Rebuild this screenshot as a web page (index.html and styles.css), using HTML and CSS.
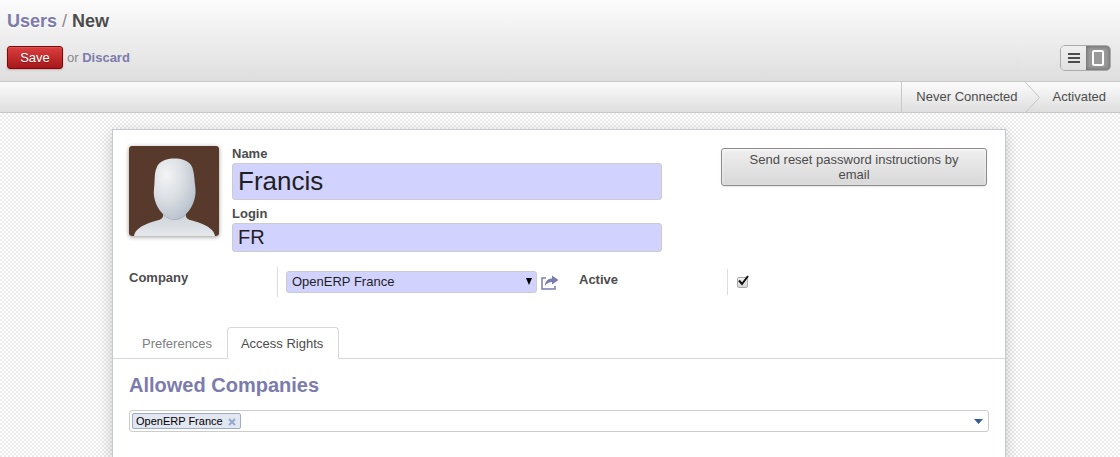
FILE: index.html
```html
<!DOCTYPE html>
<html lang="en">
<head>
<meta charset="utf-8">
<title>Users / New</title>
<link rel="stylesheet" href="styles.css">
</head>
<body>
<header class="control-panel">
  <h1 class="breadcrumb"><a href="#users">Users</a> <span class="separator">/</span> New</h1>
  <div class="toolbar">
    <div class="actions">
      <button class="btn-save" type="submit" form="user-form">Save</button>
      <span>or <a href="#discard">Discard</a></span>
    </div>
    <div class="view-switch">
      <button type="button" aria-label="List view">
        <svg width="12" height="10" viewBox="0 0 12 10"><path d="M0 1h12M0 5h12M0 9h12" stroke="#4c4c4c" stroke-width="2"/></svg>
      </button>
      <button class="active" type="button" aria-label="Form view">
        <svg width="14" height="18" viewBox="0 0 14 18"><rect x="2" y="2" width="10" height="14" rx="1" fill="none" stroke="#fff" stroke-width="2"/></svg>
      </button>
    </div>
  </div>
</header>
<div class="status-row">
  <ol class="status">
    <li>Never Connected</li>
    <li class="arrow"><svg width="16" height="31" viewBox="0 0 16 31"><path d="M0 0L14.500 15.500L0 31" fill="none" stroke="#c4c4c4"/></svg></li>
    <li>Activated</li>
  </ol>
</div>
<main class="workspace">
  <form class="sheet" id="user-form">
    <div class="identity">
      <svg class="avatar" width="90" height="90" viewBox="0 0 90 90" role="img" aria-label="User photo">
        <defs>
          <linearGradient id="body" x1="0" y1="0" x2="0" y2="1"><stop offset="0" stop-color="#b9c2cc"/><stop offset=".4" stop-color="#d3d8dd"/><stop offset="1" stop-color="#e6e9ec"/></linearGradient>
          <radialGradient id="head" cx=".3" cy=".28" r=".85"><stop offset="0" stop-color="#f3f4f5"/><stop offset=".45" stop-color="#dce0e4"/><stop offset="1" stop-color="#b3bdc9"/></radialGradient>
        </defs>
        <rect width="90" height="90" fill="#573a2b"/>
        <path d="M5 90C6 84 12 80 20 77C28 74 34 74 34 70V62H57V70C57 74 63 74 71 77C79 80 85 84 86 90Z" fill="url(#body)"/>
        <path d="M34 67Q45 79 57 67V69Q46 79 34 69Z" fill="#8f9daf" opacity=".7"/>
        <path d="M45.500 12.500C54 12.500 61 15 63.500 22C65.500 28 65.500 36 66.500 43C67.500 53 62 64 56 69C50 74 41 74 35 69C29 64 23.500 53 25 43C26 36 25 28 27.500 22C30 15 37 12.500 45.500 12.500Z" fill="url(#head)"/>
      </svg>
      <div class="names">
        <label for="name">Name</label>
        <input class="name-input" id="name" type="text" value="Francis">
        <label for="login">Login</label>
        <input class="login-input" id="login" type="text" value="FR">
      </div>
      <button class="btn-reset" type="button">Send reset password instructions by email</button>
    </div>
    <div class="groups">
      <div class="group">
        <label class="group-label" for="company">Company</label>
        <div class="group-field">
          <div class="select-wrap">
            <select id="company"><option>OpenERP France</option></select>
            <svg class="caret" width="6" height="7" viewBox="0 0 6 7"><path d="M0 0H6L3 7Z" fill="#000"/></svg>
          </div>
          <a class="open-link" href="#company" aria-label="Open company"><svg width="18" height="15" viewBox="0 0 18 15"><path d="M5 3H1V14H14V11" fill="none" stroke="#7c7bad" stroke-width="1.500"/><path d="M11 0.500L17.500 5L11 9.500V7C8 7 6 8 4 11C4 6 7 3.500 11 3.500Z" fill="#7c7bad"/></svg></a>
        </div>
      </div>
      <div class="group group-active">
        <label class="group-label" for="active">Active</label>
        <div class="group-field">
          <input class="check" id="active" type="checkbox" checked>
          <svg class="tick" width="12" height="12" viewBox="0 0 12 12"><path d="M2 5.500L5 9L11 1" fill="none" stroke="#111" stroke-width="2"/></svg>
        </div>
      </div>
    </div>
    <div class="tabs" role="tablist">
      <button type="button" role="tab" aria-selected="false">Preferences</button>
      <button type="button" role="tab" aria-selected="true">Access Rights</button>
    </div>
    <section class="page">
      <h2>Allowed Companies</h2>
      <div class="tag-field">
        <span class="tag">OpenERP France <button type="button" aria-label="Remove OpenERP France"><svg width="8" height="8" viewBox="0 0 8 8"><path d="M1 1L7 7M7 1L1 7" stroke="#94a9cf" stroke-width="2"/></svg></button></span>
        <input type="text" aria-label="Allowed companies">
        <button class="tag-open" type="button" aria-label="Show companies"><svg width="9" height="5" viewBox="0 0 9 5"><path d="M0 0H9L4.500 5Z" fill="#2f5d94"/></svg></button>
      </div>
    </section>
  </form>
</main>
</body>
</html>
```
FILE: styles.css
```css
* {
  box-sizing: border-box;
}

body {
  margin: 0;
  min-height: 100vh;
  display: flex;
  flex-direction: column;
  color: #4c4c4c;
  background: #fff;
  font: 13px/15px "Liberation Sans", Arial, sans-serif;
}

button,
input,
select {
  margin: 0;
  font: inherit;
  color: inherit;
}

button {
  cursor: pointer;
}

svg {
  display: block;
}

a {
  color: #7c7bad;
  font-weight: bold;
  text-decoration: none;
}

.control-panel {
  padding: 8px 9px 10px 7px;
  border-bottom: 1px solid #c8c8c8;
  background: linear-gradient(#fcfcfc, #dedede);
}

.breadcrumb {
  margin: 0 0 11px;
  font-size: 18px;
  line-height: 26px;
  text-shadow: 0 1px 1px #fff;
}

.separator {
  color: #8a8a8a;
  font-weight: normal;
}

.toolbar,
.actions {
  display: flex;
}

.toolbar {
  align-items: flex-start;
  justify-content: space-between;
}

.actions {
  align-items: center;
  gap: 4px;
  height: 25px;
  color: #8a8a8a;
}

.btn-save {
  width: 56px;
  height: 23px;
  padding: 0;
  border: 1px solid #900000;
  border-radius: 3px;
  color: #fff;
  background: linear-gradient(#dc3e3e, #a6181b);
  box-shadow: 0 1px 2px rgba(0, 0, 0, .2), inset 0 1px 1px rgba(155, 155, 155, .4);
  text-shadow: 0 1px 1px rgba(0, 0, 0, .3);
}

.view-switch {
  display: flex;
  height: 26px;
  border: 1px solid #ababab;
  border-radius: 5px;
  overflow: hidden;
}

.view-switch button {
  display: flex;
  align-items: center;
  justify-content: center;
  width: 25px;
  padding: 0;
  border: 0;
  background: linear-gradient(#efefef, #e0e0e0);
}

.view-switch .active {
  width: 24px;
  background: #999;
  box-shadow: inset 0 0 4px rgba(0, 0, 0, .4);
}

.status-row {
  display: flex;
  justify-content: flex-end;
  height: 31px;
  border-bottom: 1px solid #c8c8c8;
  background: linear-gradient(#fcfcfc, #dedede);
}

.status {
  display: flex;
  margin: 0;
  padding: 0 14px;
  border-left: 1px solid #c8c8c8;
  list-style: none;
  line-height: 30px;
}

.arrow {
  margin: 0 12px 0 7px;
}

.workspace {
  flex: 1;
  display: flex;
  justify-content: center;
  padding: 16px 18px 0 16px;
  background: repeating-conic-gradient(#ebebeb 0 25%, #fff 0 50%) 0 0 / 4px 4px;
}

.sheet {
  width: 100%;
  max-width: 894px;
  padding: 16px 0;
  border: 1px solid #c8c8d3;
  border-bottom: 0;
  background: #fff;
  box-shadow: 0 4px 14px rgba(0, 0, 0, .2);
}

.identity {
  display: flex;
  align-items: flex-start;
  padding: 0 18px 0 16px;
}

.avatar {
  border-radius: 3px;
  box-shadow: 0 1px 4px rgba(0, 0, 0, .4);
}

.names {
  flex: 0 1 430px;
  display: flex;
  flex-direction: column;
  margin-left: 13px;
}

label {
  font-weight: bold;
}

.names label {
  padding-bottom: 2px;
}

.names input {
  width: 100%;
  padding: 0 5px;
  border: 1px solid #ccc;
  border-radius: 3px;
  color: #1f1f1f;
  background: #d2d2ff;
}

.names .name-input {
  height: 37px;
  margin-bottom: 6px;
  font-size: 26px;
}

.names .login-input {
  height: 29px;
  font-size: 20px;
}

.btn-reset {
  width: 266px;
  margin: 2px 0 0 auto;
  padding: 3px 12px;
  border: 1px solid #8c8c8c;
  border-radius: 3px;
  background: linear-gradient(#efefef, #d8d8d8);
  box-shadow: 0 1px 2px rgba(0, 0, 0, .1), inset 0 1px 3px rgba(255, 255, 255, .8);
}

.groups {
  display: grid;
  grid-template-columns: 450px 1fr;
  padding: 15px 16px 0;
}

.group {
  display: grid;
  grid-template-columns: 148px 1fr;
  height: 32px;
}

.group-label {
  padding-top: 3px;
}

.group-active {
  padding-top: 2px;
}

.group-field {
  display: flex;
  align-items: center;
  position: relative;
  height: 30px;
  padding-left: 8px;
  border-left: 1px solid #ddd;
}

.group-active .group-field {
  height: 26px;
}

.select-wrap {
  position: relative;
  width: 251px;
}

select {
  display: block;
  width: 100%;
  height: 22px;
  padding: 0 5px 1px;
  border: 1px solid #ccc;
  border-radius: 3px;
  appearance: none;
  color: #1f1f1f;
  background: #d2d2ff;
}

.caret {
  position: absolute;
  top: 7px;
  right: 5px;
  pointer-events: none;
}

.open-link {
  margin-left: 4px;
}

.check {
  appearance: none;
  width: 11px;
  height: 11px;
  margin-left: 1px;
  border: 1px solid #aaa;
  border-radius: 2px;
  background: linear-gradient(#f2f2f2, #d8d8d8);
}

.tick {
  position: absolute;
  top: 6px;
  left: 9px;
  pointer-events: none;
}

.check:not(:checked) + .tick {
  display: none;
}

.tabs {
  display: flex;
  margin-top: 28px;
  padding-left: 16px;
  border-bottom: 1px solid #d8d8d8;
}

.tabs button {
  height: 32px;
  margin-bottom: -1px;
  padding: 0 14px 0 12px;
  border: 1px solid transparent;
  border-radius: 4px 4px 0 0;
  color: #808080;
  background: none;
}

.tabs [aria-selected="true"] {
  min-width: 112px;
  border-color: #d8d8d8;
  border-bottom-color: #fff;
  color: #4c4c4c;
  background: #fff;
}

.page {
  padding: 14px 16px;
}

h2 {
  margin: 0 0 13px;
  color: #7c7bad;
  font-size: 20px;
  line-height: 24px;
}

.tag-field {
  display: flex;
  align-items: center;
  height: 22px;
  padding: 0 5px 0 2px;
  border: 1px solid #ccc;
  border-radius: 3px;
}

.tag {
  display: flex;
  align-items: center;
  gap: 5px;
  height: 16px;
  padding: 0 4px 0 3px;
  border: 1px solid #9daccc;
  border-radius: 2px;
  color: #000;
  background: #e2e6f0;
  font-size: 11px;
}

.tag button,
.tag-open {
  padding: 0;
  border: 0;
  background: none;
}

.tag button {
  padding-top: 1px;
}

.tag-field input {
  flex: 1;
  min-width: 0;
  height: 18px;
  border: 0;
  outline: 0;
  background: none;
}
```
